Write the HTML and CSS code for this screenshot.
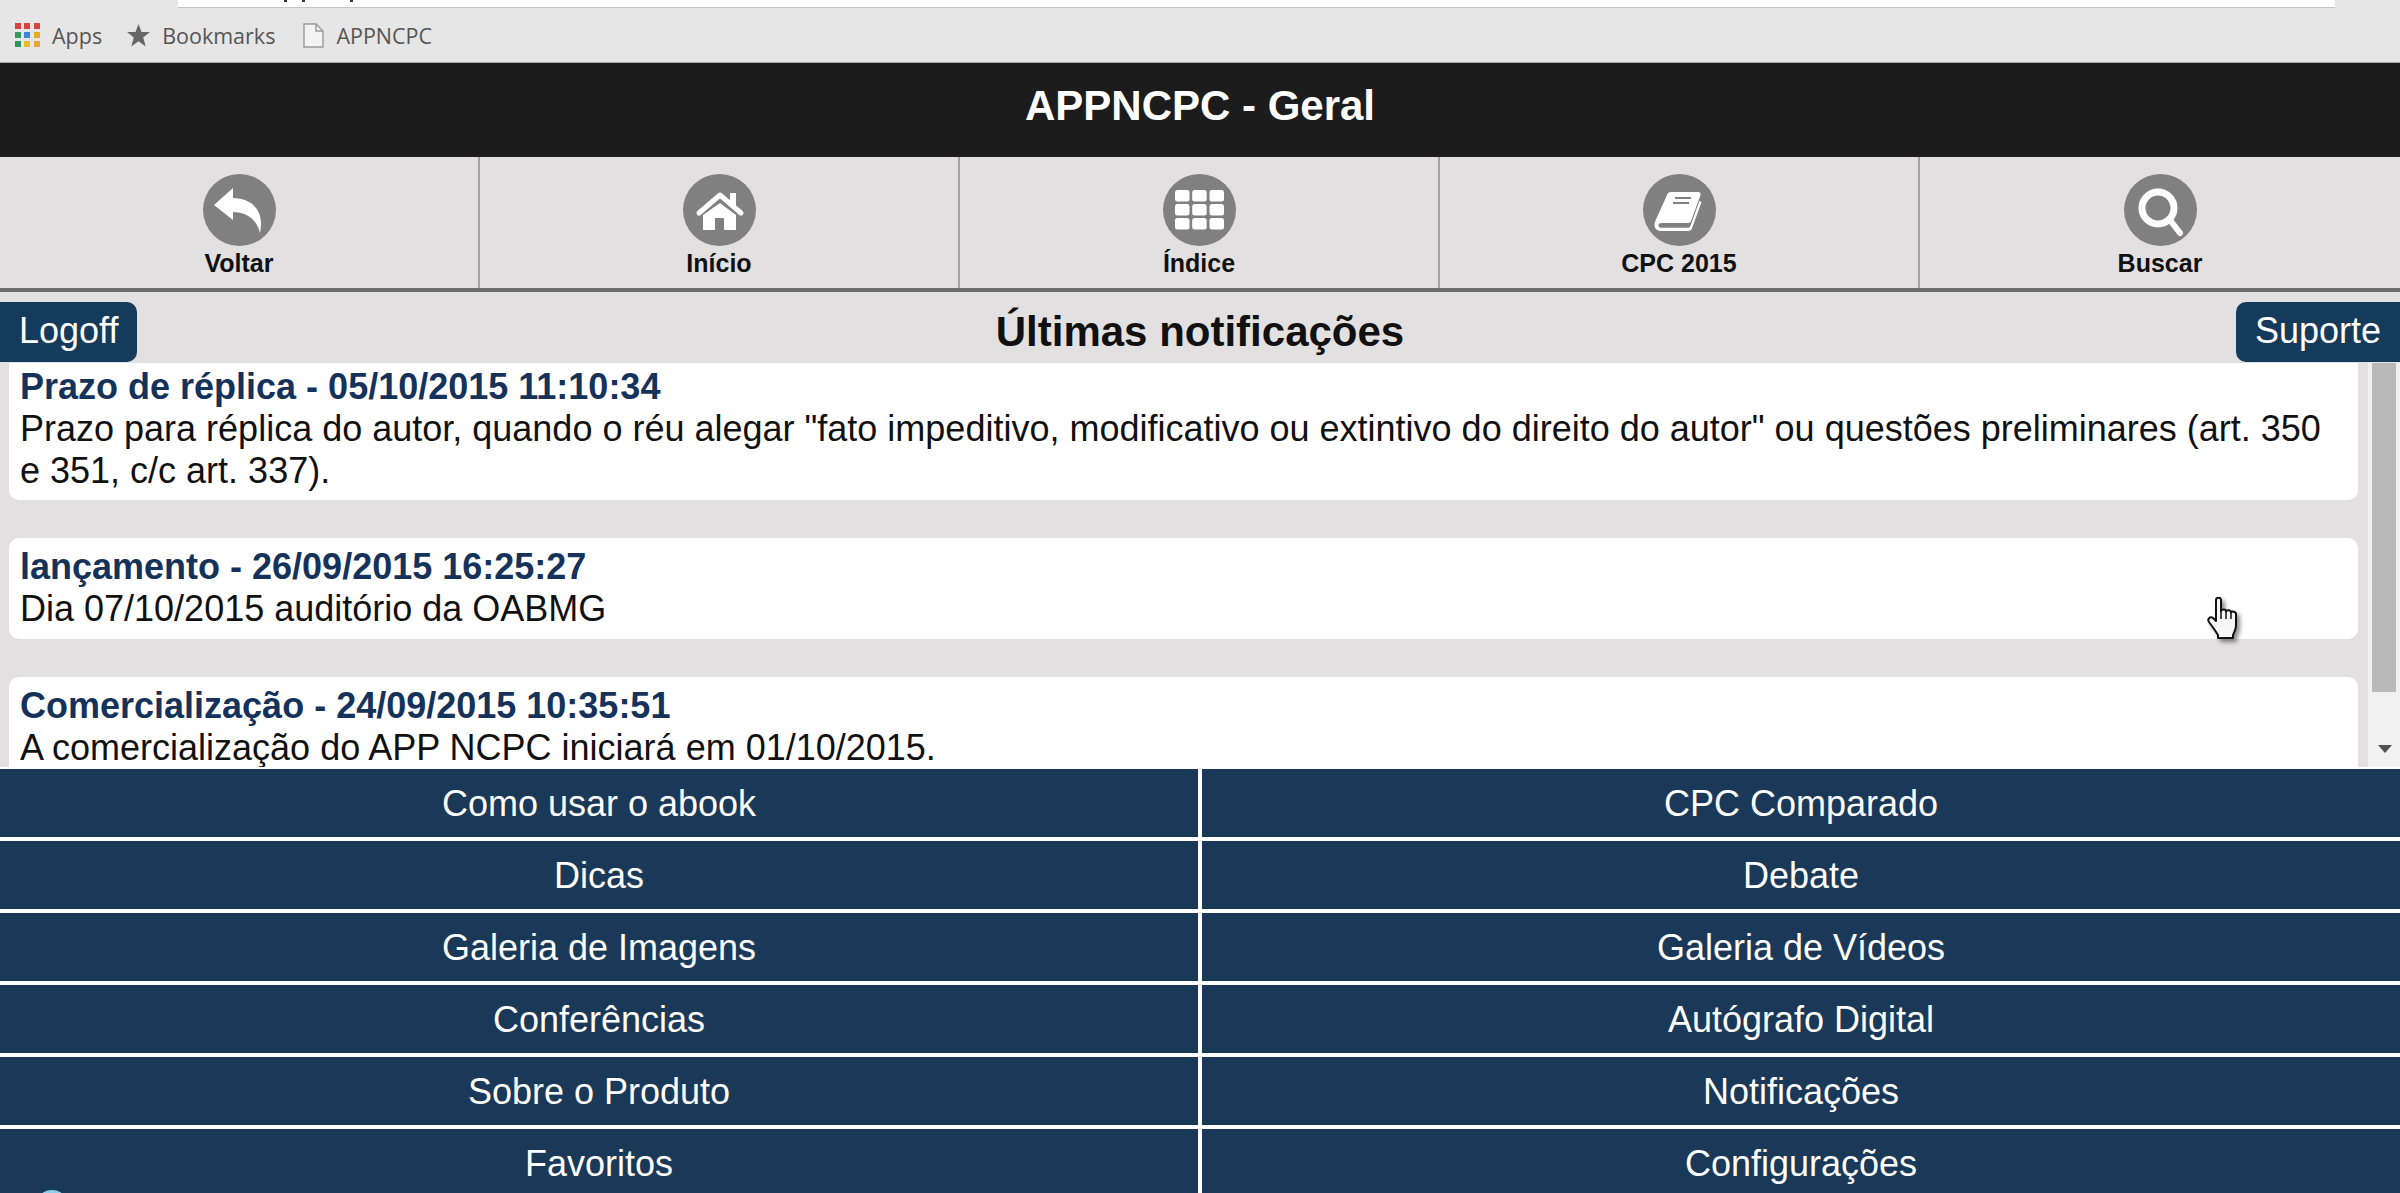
FILE: index.html
```html
<!DOCTYPE html>
<html lang="pt-BR">
<head>
  <meta charset="UTF-8">
  <meta name="viewport" content="width=device-width, initial-scale=1.0">
  <title>APPNCPC - Geral</title>
  <link rel="stylesheet" href="styles.css">
</head>
<body>
  <div class="browser-top">
    <div class="address-row"><div class="address-bar"><i class="speck"></i><i class="speck"></i><i class="speck speck-last"></i></div></div>
    <div class="bookmarks">
      <div class="bookmark bookmark-apps">
        <svg class="bm-icon" width="25" height="24" viewBox="0 0 25 24">
          <rect x="0" y="0" width="6" height="6" fill="#d9423a"/><rect x="9" y="0" width="6" height="6" fill="#d9423a"/><rect x="19" y="0" width="6" height="6" fill="#d9423a"/>
          <rect x="0" y="9" width="6" height="6" fill="#3a9a5b"/><rect x="9" y="9" width="6" height="6" fill="#3f85e0"/><rect x="19" y="9" width="6" height="6" fill="#e5ab1e"/>
          <rect x="0" y="18" width="6" height="6" fill="#2f9460"/><rect x="9" y="18" width="6" height="6" fill="#eeb72a"/><rect x="19" y="18" width="6" height="6" fill="#e9a53a"/>
        </svg>
        <span>Apps</span>
      </div>
      <div class="bookmark bookmark-star">
        <svg class="bm-icon" width="23" height="23" viewBox="0 0 23 23"><path d="M11.5 0l3 8h8.500l-6.800 5.400 2.500 9.100-7.200-5.300-7.200 5.300 2.500-9.100L0 8h8.500z" fill="#666"/></svg>
        <span>Bookmarks</span>
      </div>
      <div class="bookmark bookmark-doc">
        <svg class="bm-icon" width="21" height="25" viewBox="0 0 21 25"><path d="M1 1h12l7 7v16H1z" fill="#f3f3f3" stroke="#9a9a9a" stroke-width="1.400"/><path d="M13 1v7h7" fill="none" stroke="#9a9a9a" stroke-width="1.400"/></svg>
        <span>APPNCPC</span>
      </div>
    </div>
  </div>

  <header class="app-title">APPNCPC - Geral</header>

  <nav class="nav-bar">
    <a class="nav-item">
      <svg class="nav-icon" width="73" height="72" viewBox="0 0 73 72">
        <ellipse cx="36.500" cy="36" rx="36.500" ry="36" fill="#808080"/>
        <path d="M11 31L30 14v10c18 0 32 12 27 35-3-13-13-21-27-21v8z" fill="#fff"/>
      </svg>
      <span>Voltar</span>
    </a>
    <a class="nav-item">
      <svg class="nav-icon" width="73" height="72" viewBox="0 0 73 72">
        <ellipse cx="36.500" cy="36" rx="36.500" ry="36" fill="#808080"/>
        <path d="M47 19h6v13h-6z" fill="#fff"/>
        <path d="M16 39L37 21l21 18" fill="none" stroke="#fff" stroke-width="5" stroke-linecap="round" stroke-linejoin="round"/>
        <path d="M37 29l16 12v15H41V44h-9v12H20V41z" fill="#fff"/>
      </svg>
      <span>Início</span>
    </a>
    <a class="nav-item">
      <svg class="nav-icon" width="73" height="72" viewBox="0 0 73 72">
        <ellipse cx="36.500" cy="36" rx="36.500" ry="36" fill="#808080"/>
        <g fill="#fff">
          <rect x="12" y="16" width="14.500" height="11.500" rx="2.500"/><rect x="29.200" y="16" width="14.500" height="11.500" rx="2.500"/><rect x="46.500" y="16" width="14.500" height="11.500" rx="2.500"/>
          <rect x="12" y="30" width="14.500" height="11.500" rx="2.500"/><rect x="29.200" y="30" width="14.500" height="11.500" rx="2.500"/><rect x="46.500" y="30" width="14.500" height="11.500" rx="2.500"/>
          <rect x="12" y="44" width="14.500" height="11.500" rx="2.500"/><rect x="29.200" y="44" width="14.500" height="11.500" rx="2.500"/><rect x="46.500" y="44" width="14.500" height="11.500" rx="2.500"/>
        </g>
      </svg>
      <span>Índice</span>
    </a>
    <a class="nav-item">
      <svg class="nav-icon" width="73" height="72" viewBox="0 0 73 72">
        <ellipse cx="36.500" cy="36" rx="36.500" ry="36" fill="#808080"/>
        <path d="M28 18h27c2 0 3 1 2.500 3L48 47c-.6 1.500-1.500 2-3 2H19c-3 0-4 1.500-3.500 3 .4 1.200 1.500 1.800 3 1.800h26c1.500 0 2.500-.6 3-2l9-25 2 1.500-9.500 26c-.6 1.700-2 2.700-4 2.700H18c-4 0-6.500-2.500-6.500-6 0-1.500.3-3 1-4.500L24 21c.7-2 2-3 4-3z" fill="#fff"/>
        <path d="M32 24h16M30 29h16" stroke="#808080" stroke-width="2" fill="none"/>
      </svg>
      <span>CPC 2015</span>
    </a>
    <a class="nav-item">
      <svg class="nav-icon" width="73" height="72" viewBox="0 0 73 72">
        <ellipse cx="36.500" cy="36" rx="36.500" ry="36" fill="#808080"/>
        <circle cx="34" cy="34" r="16" fill="none" stroke="#fff" stroke-width="7"/>
        <path d="M46 46l10 13" stroke="#fff" stroke-width="6" stroke-linecap="round"/>
      </svg>
      <span>Buscar</span>
    </a>
  </nav>

  <div class="sub-header">
    <a class="side-btn side-btn-left">Logoff</a>
    <h1>Últimas notificações</h1>
    <a class="side-btn side-btn-right">Suporte</a>
  </div>

  <div class="notes">
    <div class="notes-list">
      <div class="note note-first">
        <div class="note-title">Prazo de réplica - 05/10/2015 11:10:34</div>
        <div class="note-text">Prazo para réplica do autor, quando o réu alegar "fato impeditivo, modificativo ou extintivo do direito do autor" ou questões preliminares (art. 350 e 351, c/c art. 337).</div>
      </div>
      <div class="note">
        <div class="note-title">lançamento - 26/09/2015 16:25:27</div>
        <div class="note-text">Dia 07/10/2015 auditório da OABMG</div>
      </div>
      <div class="note">
        <div class="note-title">Comercialização - 24/09/2015 10:35:51</div>
        <div class="note-text">A comercialização do APP NCPC iniciará em 01/10/2015.</div>
      </div>
    </div>
    <div class="scrollbar">
      <div class="scroll-thumb"></div>
      <div class="scroll-arrow"></div>
    </div>
  </div>

  <div class="menu">
    <a class="menu-item">Como usar o abook</a>
    <a class="menu-item">CPC Comparado</a>
    <a class="menu-item">Dicas</a>
    <a class="menu-item">Debate</a>
    <a class="menu-item">Galeria de Imagens</a>
    <a class="menu-item">Galeria de Vídeos</a>
    <a class="menu-item">Conferências</a>
    <a class="menu-item">Autógrafo Digital</a>
    <a class="menu-item">Sobre o Produto</a>
    <a class="menu-item">Notificações</a>
    <a class="menu-item">Favoritos</a>
    <a class="menu-item">Configurações</a>
  </div>

  <div class="corner-glow"></div>

  <svg class="hand-cursor" width="34" height="44" viewBox="0 0 34 44">
    <path d="M9 3c0-3 5-3 5 0v11c1-2 5-2 5 .5 1-2 5-1.500 5 1 1-1.500 5-1 5 1.500v11c0 4-1.500 7-3 10v3H11v-3C8 33 5 29 2 25c-2-3 1-6 4-4l3 3z" fill="#f6f6f6" stroke="#111" stroke-width="2" stroke-linejoin="round"/>
    <path d="M14 14v8M19 15v7M24 16v6" stroke="#111" stroke-width="1.500" fill="none"/>
  </svg>
</body>
</html>
```

FILE: styles.css
```css
html, body {
  margin: 0;
  padding: 0;
}
body {
  position: relative;
  height: 1193px;
  overflow: hidden;
  font-family: "Liberation Sans", Arial, sans-serif;
  background-color: #e2e0e0;
}
a {
  display: block;
  cursor: pointer;
}

/* browser chrome */
.browser-top {
  height: 62px;
  background-color: #e6e6e6;
  border-bottom: 1px solid #a8a8a8;
}
.address-row {
  height: 8px;
  padding: 0 65px 0 178px;
}
.address-bar {
  display: flex;
  gap: 15px;
  height: 7px;
  padding-left: 106px;
  background-color: #fff;
  border-bottom: 1px solid #c4c4c4;
}
.speck {
  display: block;
  width: 3px;
  height: 2px;
  background-color: #333;
}
.speck-last {
  margin-left: 30px;
}
.bookmarks {
  display: flex;
  align-items: center;
  height: 54px;
  padding-left: 15px;
  font-family: "Open Sans", sans-serif;
  font-size: 21.5px;
  color: #555;
}
.bookmark {
  display: flex;
  align-items: center;
}
.bm-icon {
  margin-right: 12px;
}
.bookmark-apps {
  margin-right: 25px;
}
.bookmark-star {
  margin-right: 28px;
}

/* title */
.app-title {
  height: 94px;
  line-height: 86px;
  background-color: #1c1c1c;
  color: #fff;
  text-align: center;
  font-size: 42px;
  font-weight: bold;
}

/* icon nav */
.nav-bar {
  display: grid;
  grid-template-columns: repeat(5, 1fr);
  height: 131px;
  background-color: #e2e0e0;
  border-bottom: 4px solid #6e6e6e;
}
.nav-item {
  display: flex;
  flex-direction: column;
  align-items: center;
  padding-top: 17px;
  border-right: 2px solid #a3a3a3;
  font-size: 25px;
  font-weight: bold;
  color: #111;
}
.nav-item:last-child {
  border-right: none;
}
.nav-icon {
  margin-bottom: 3px;
}

/* heading row */
.sub-header {
  display: grid;
  grid-template-columns: 1fr auto 1fr;
  height: 71px;
  padding-top: 10px;
  box-sizing: border-box;
}
.sub-header h1 {
  margin: 0;
  font-size: 42px;
  line-height: 59px;
  font-weight: bold;
  color: #111;
}
.side-btn {
  height: 60px;
  line-height: 58px;
  padding: 0 19px;
  background-color: #143a5c;
  color: #fff;
  font-size: 36px;
}
.side-btn-left {
  justify-self: start;
  border-radius: 0 10px 10px 0;
}
.side-btn-right {
  justify-self: end;
  border-radius: 10px 0 0 10px;
}

/* notifications */
.notes {
  display: flex;
  height: 404px;
  overflow: hidden;
}
.notes-list {
  flex: 1;
  display: flex;
  flex-direction: column;
  gap: 38px;
  padding: 0 10px 0 9px;
  min-width: 0;
  background-color: #e2e0e0;
}
.note {
  flex-shrink: 0;
  padding: 8px 11px 9px;
  background-color: #fff;
  border-radius: 10px;
  font-size: 36px;
  line-height: 42px;
  color: #111;
}
.note-first {
  padding-top: 3px;
  padding-bottom: 8px;
  border-radius: 0 0 10px 10px;
}
.note-title {
  font-weight: bold;
  color: #14325a;
}
.scrollbar {
  position: relative;
  width: 32px;
  background-color: #f1f1f1;
}
.scroll-thumb {
  width: 24px;
  height: 329px;
  margin-left: 4px;
  background-color: #b9b9b9;
}
.scroll-arrow {
  width: 0;
  height: 0;
  margin: 53px 0 0 10px;
  border-left: 7px solid transparent;
  border-right: 7px solid transparent;
  border-top: 8px solid #505050;
}

/* bottom menu */
.menu {
  display: grid;
  grid-template-columns: 1fr 1fr;
  grid-auto-rows: 68px;
  gap: 4px;
  padding-top: 2px;
  background-color: #fff;
}
.menu-item {
  line-height: 69px;
  text-align: center;
  background-color: #1a3857;
  color: #fff;
  font-size: 36px;
}

/* over the page */
.corner-glow {
  position: absolute;
  left: 40px;
  top: 1190px;
  width: 24px;
  height: 16px;
  border-radius: 50%;
  background-color: #8fd0ee;
}
.hand-cursor {
  position: absolute;
  left: 2207px;
  top: 597px;
  filter: drop-shadow(3px 3px 2px rgba(0, 0, 0, 0.45));
}
```
